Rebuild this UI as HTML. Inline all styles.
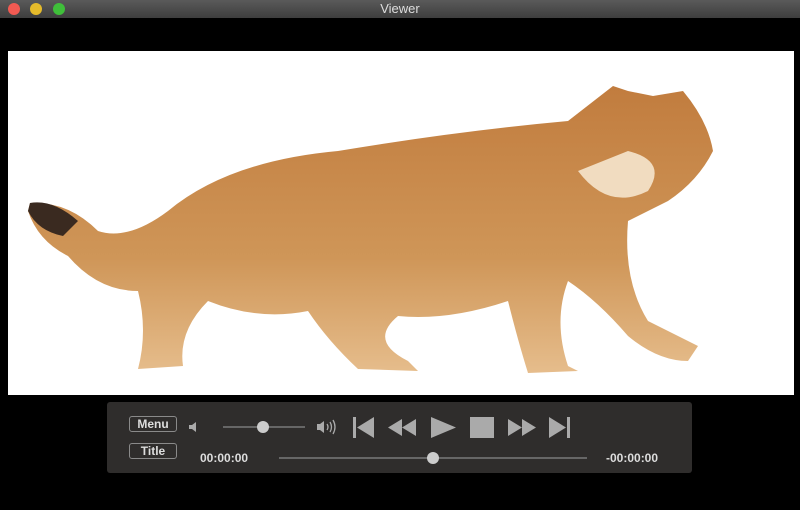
<!DOCTYPE html>
<html><head><style>
html,body{margin:0;padding:0;background:#000;width:800px;height:510px;overflow:hidden;font-family:"Liberation Sans",sans-serif}
#tb{position:absolute;left:0;top:0;width:800px;height:18px;background:linear-gradient(#5a5a5a,#3e3e3e);color:#ddd;font-size:13px;text-align:center;line-height:18px}
.d{position:absolute;top:3px;width:12px;height:12px;border-radius:50%}
#img{position:absolute;left:8px;top:51px;width:786px;height:344px;background:#fff;overflow:hidden}
#cp{position:absolute;left:107px;top:402px;width:585px;height:71px;background:#2f2d2c;border-radius:3px}
.b{position:absolute;left:22px;width:46px;height:14px;border:1px solid #8a8a8a;border-radius:3px;color:#ddd;font-size:12px;text-align:center;line-height:14px;font-weight:bold}
.t{position:absolute;top:49px;color:#ddd;font-size:12px;font-weight:bold}
.ln{position:absolute;height:2px;background:#666}
.k{position:absolute;width:12px;height:12px;border-radius:50%;background:#ccc}
</style></head><body>
<div id="tb">Viewer
<div class="d" style="left:8px;background:#f25a52"></div>
<div class="d" style="left:30px;background:#e5bb2b"></div>
<div class="d" style="left:53px;background:#3fbf3a"></div></div>
<div id="img"><svg width="786" height="344" viewBox="0 0 786 344">
<defs><linearGradient id="g" x1="0" y1="0" x2="0" y2="1"><stop offset="0" stop-color="#c17c3e"/><stop offset="0.6" stop-color="#cf9658"/><stop offset="1" stop-color="#e6bd8c"/></linearGradient></defs>
<path d="M22 152 Q60 150 90 180 Q120 190 160 160 Q220 110 330 100 Q450 80 560 70 L605 35 L620 40 L645 45 L675 40 Q700 70 705 100 Q690 130 660 150 L620 170 Q615 230 640 270 Q670 285 690 295 L680 310 Q650 310 620 285 Q590 250 560 230 Q545 270 560 315 L570 320 L520 322 Q510 290 500 250 Q440 270 390 265 Q360 290 400 310 L410 320 L350 318 Q320 290 300 260 Q250 270 200 250 Q170 280 175 315 L130 318 Q140 280 130 240 Q90 240 60 205 Q30 190 20 160 Z" fill="url(#g)"/>
<path d="M22 152 Q45 148 70 170 L55 185 Q30 180 20 160Z" fill="#3a2a20"/>
<path d="M570 120 Q600 160 640 140 Q660 110 620 100Z" fill="#f1dcc0"/>
</svg></div>
<div id="cp">
<div class="b" style="top:14px">Menu</div>
<div class="b" style="top:41px">Title</div>
<svg style="position:absolute;left:80px;top:18px" width="16" height="14"><path d="M2 5h3l4-3v10l-4-3H2z" fill="#aaa"/></svg>
<div class="ln" style="left:116px;top:24px;width:82px"></div>
<div class="k" style="left:150px;top:19px"></div>
<svg style="position:absolute;left:208px;top:17px" width="24" height="16"><path d="M2 5h3l4-3v12l-4-3H2z" fill="#aaa"/><path d="M12 5q2 3 0 6M15 3q3 5 0 10M18 1q4 7 0 14" stroke="#aaa" fill="none" stroke-width="1.3"/></svg>
<svg style="position:absolute;left:245px;top:14px" width="330" height="24" fill="#aaa">
<rect x="1" y="1" width="3" height="21"/><path d="M5 11.5L22 1v21z"/>
<path d="M36 11.5L50 3v17zM50 11.5L64 3v17z"/>
<path d="M79 1L104 11.5L79 22z"/>
<rect x="118" y="1" width="24" height="21"/>
<path d="M156 3L170 11.5L156 20zM170 3L184 11.5L170 20z"/>
<path d="M197 1L214 11.5L197 22z"/><rect x="215" y="1" width="3" height="21"/>
</svg>
<div class="t" style="left:93px">00:00:00</div>
<div class="ln" style="left:172px;top:55px;width:308px"></div>
<div class="k" style="left:320px;top:50px"></div>
<div class="t" style="left:499px">-00:00:00</div>
</div>
</body></html>
